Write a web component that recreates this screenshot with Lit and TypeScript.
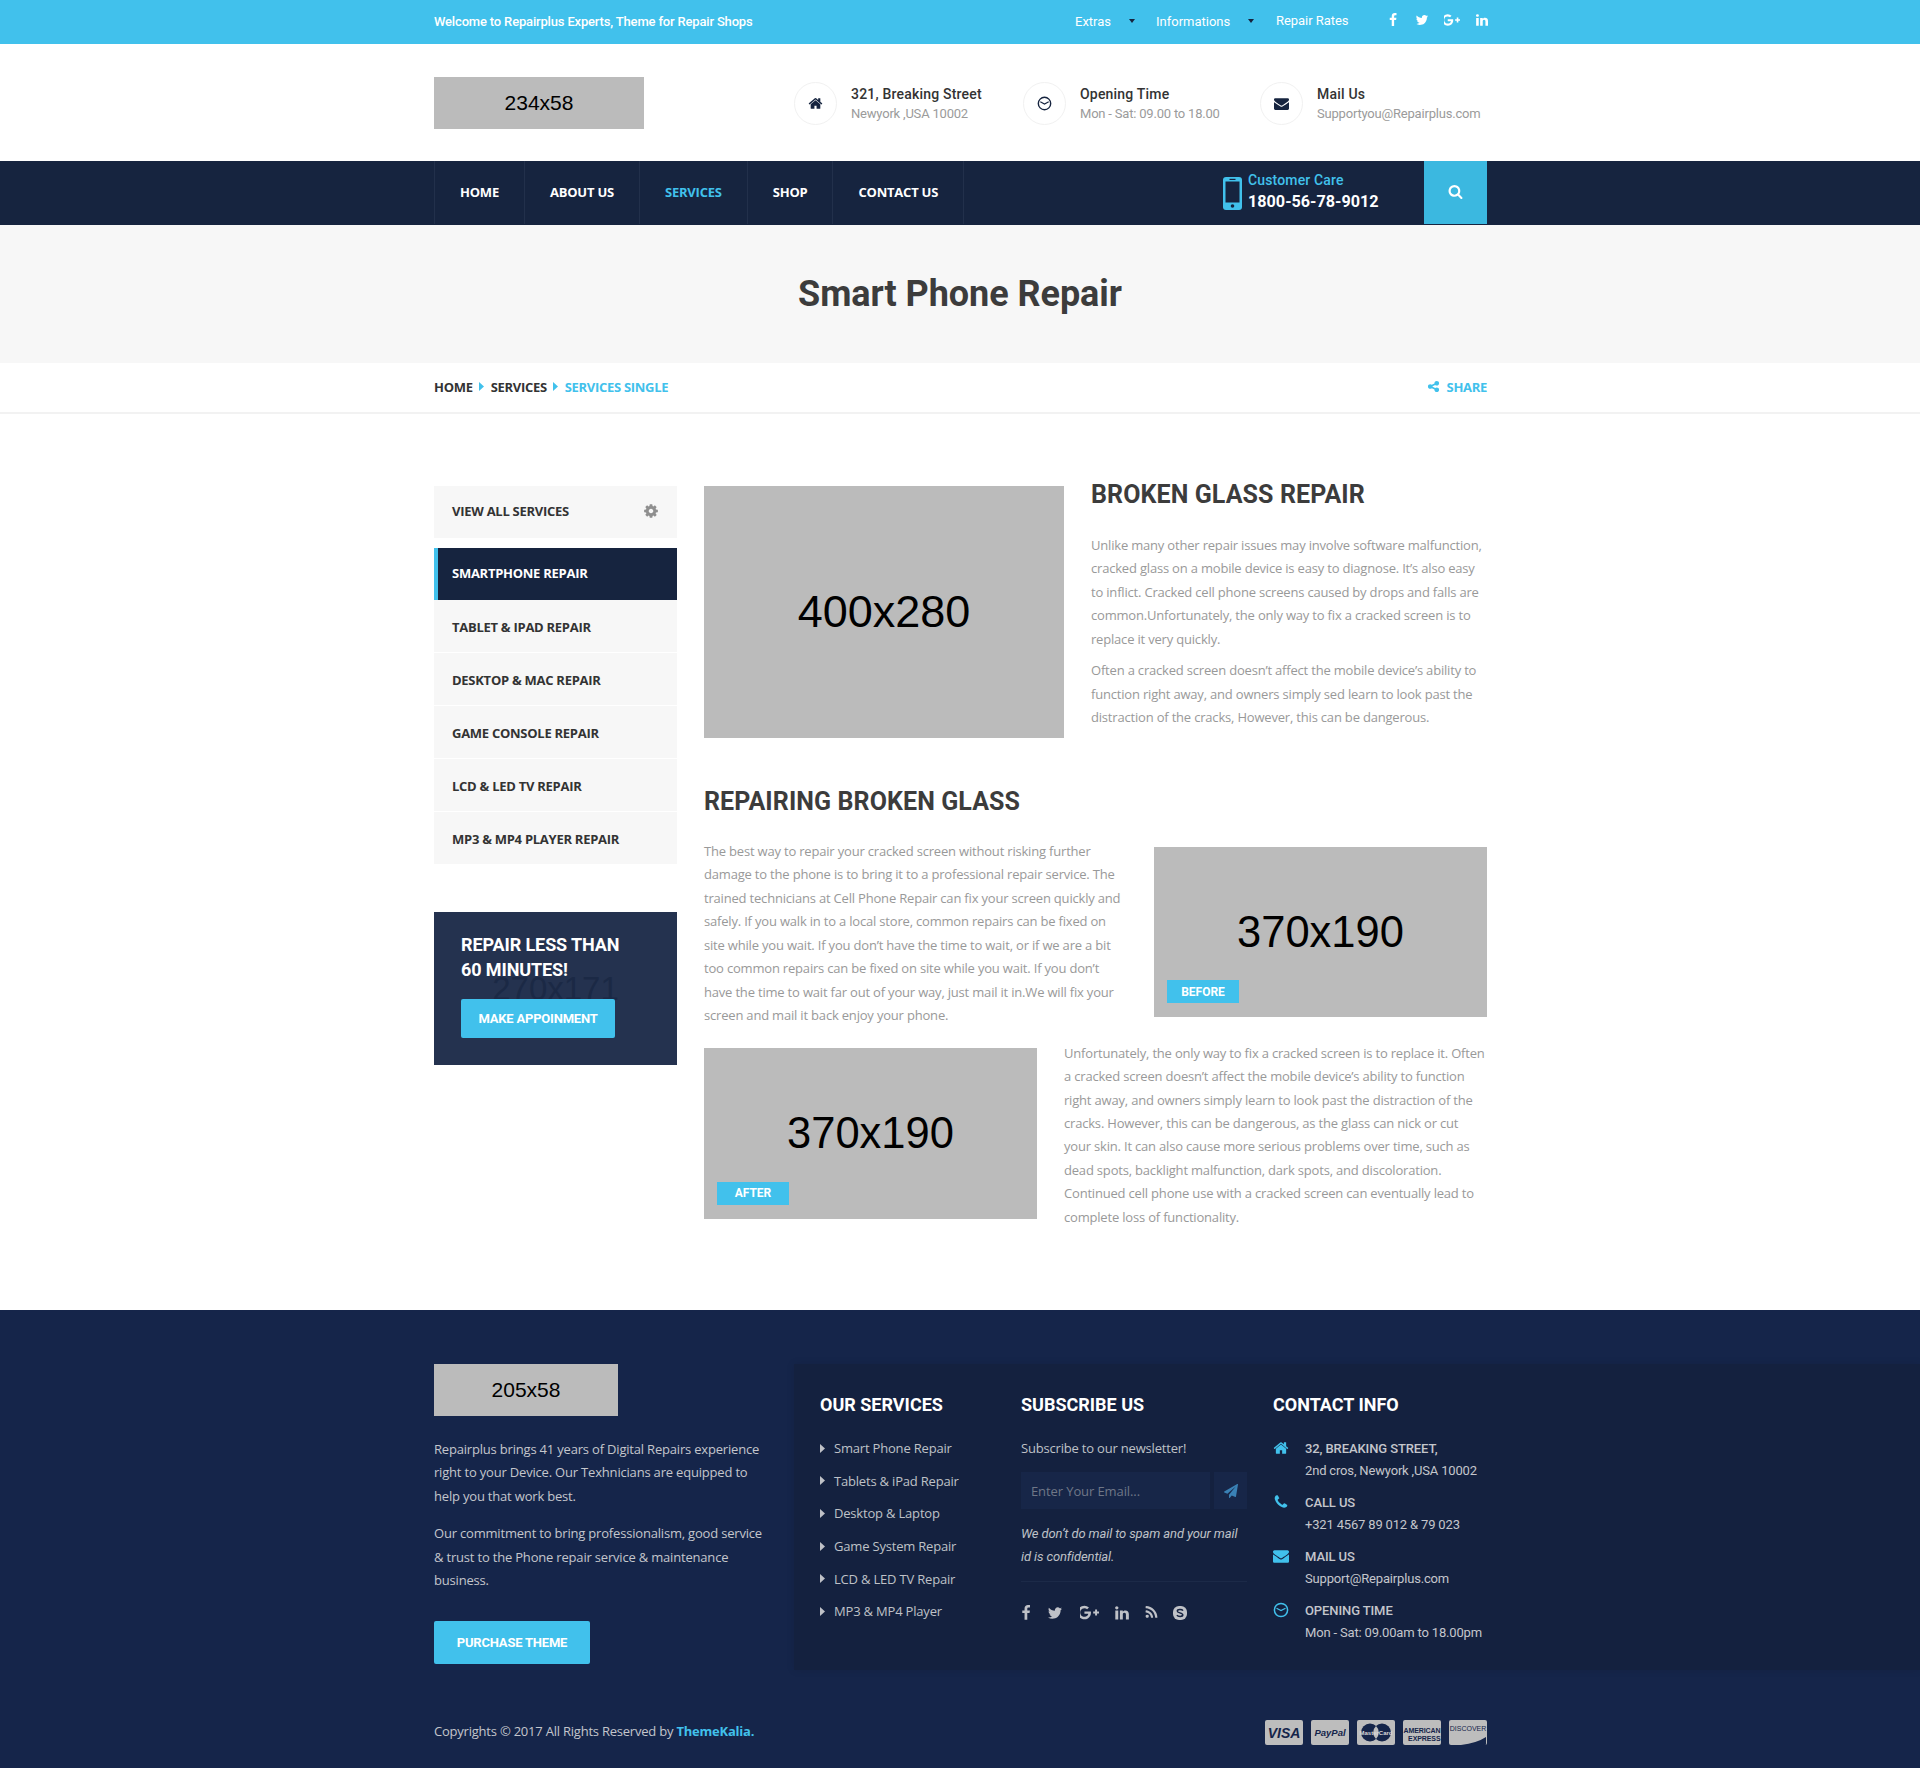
import { LitElement, html, css } from "lit";
import { customElement } from "lit/decorators.js";

// FontAwesome-ish glyph paths, 1792 grid
const P: Record<string, string> = {
  home: "M1472 992v480q0 26-19 45t-45 19h-384v-384h-256v384h-384q-26 0-45-19t-19-45v-480q0-1 .5-3t.5-3l575-474 575 474q1 2 1 6zm223-69l-62 74q-8 9-21 11h-3q-13 0-21-7l-692-577-692 577q-12 8-24 7-13-2-21-11l-62-74q-8-10-7-23.500t11-21.500l719-599q32-26 76-26t76 26l244 204v-195q0-14 9-23t23-9h192q14 0 23 9t9 23v408l219 182q10 8 11 21.500t-7 23.500z",
  mail: "M1792 710v794q0 66-47 113t-113 47h-1472q-66 0-113-47t-47-113v-794q44 49 101 87 362 246 497 345 57 42 92.500 65.500t94.500 48 110 24.500h2q51 0 110-24.500t94.500-48 92.500-65.500q170-123 498-345 57-39 100-87zm0-294q0 79-49 151t-122 123q-376 261-468 325-10 7-42.500 30.500t-54 38-52 32.500-57.500 27-50 9h-2q-23 0-50-9t-57.500-27-52-32.500-54-38-42.500-30.500q-91-64-262-182.500t-205-142.500q-62-42-117-115.500t-55-136.500q0-78 41.500-130t118.500-52h1472q65 0 112.500 47t47.500 113z",
  search: "M1216 832q0-185-131.500-316.500t-316.500-131.500-316.500 131.500-131.500 316.500 131.500 316.500 316.500 131.500 316.500-131.500 131.500-316.500zm512 832q0 52-38 90t-90 38q-54 0-90-38l-343-342q-179 124-399 124-143 0-273.500-55.500t-225-150-150-225-55.500-273.500 55.500-273.500 150-225 225-150 273.500-55.500 273.500 55.500 225 150 150 225 55.500 273.500q0 220-124 399l343 343q37 37 37 90z",
  fb: "M1343 12v264h-157q-86 0-116 36t-30 108v189h293l-39 296h-254v759h-306v-759h-255v-296h255v-218q0-186 104-288.500t277-102.500q147 0 228 12z",
  tw: "M1684 408q-67 98-162 167 1 14 1 42 0 130-38 259.500t-115.500 248.500-184.500 210.500-258 146-323 54.500q-271 0-496-145 35 4 78 4 225 0 401-138-105-2-188-64.500t-114-159.500q33 5 61 5 43 0 85-11-112-23-185.500-111.500t-73.500-205.500v-4q68 38 146 41-66-44-105-115t-39-154q0-88 44-163 121 149 294.500 238.500t371.500 99.500q-8-38-8-74 0-134 94.500-228.500t228.500-94.500q140 0 236 102 109-21 205-78-37 115-142 178 91-10 184-50z",
  in: "M477 625v991h-330v-991h330zm21-306q1 73-50.500 122t-135.500 49h-2q-82 0-132-49t-50-122q0-74 51.500-122.500t134.500-48.500 133 48.500 51 122.500zm1166 729v568h-329v-530q0-105-40.500-164.500t-126.500-59.500q-63 0-105.500 34.500t-63.500 85.500q-11 30-11 81v553h-329q2-399 2-647t-1-296l-1-48h329v144h-2q20-32 41-56t56.500-52 87-43.500 114.500-15.500q171 0 275 113.500t104 332.500z",
  rss: "M576 1344q0 80-56 136t-136 56-136-56-56-136 56-136 136-56 136 56 56 136zm512 123q2 28-17 48-18 21-47 21h-135q-25 0-43-16.500t-20-41.500q-22-229-184.500-391.500t-391.500-184.500q-25-2-41.500-20t-16.500-43v-135q0-29 21-47 17-17 43-17h5q160 13 306 80.500t259 181.500q114 113 181.500 259t80.500 306zm512 2q2 27-18 47-18 20-46 20h-143q-26 0-44.500-17.500t-19.500-42.500q-12-215-101-408.500t-231.500-336-336-231.500-408.500-102q-25-1-42.500-19.500t-17.500-43.500v-143q0-28 20-46 18-18 44-18h3q262 13 501.500 120t425.500 294q187 186 294 425.500t120 501.500z",
  phone: "M1600 1240q0 27-10 70.500t-21 68.500q-21 50-122 106-94 51-186 51-27 0-53-3.500t-57.500-12.500-47-14.500-55.500-20.500-49-18q-98-35-175-83-127-79-264-216t-216-264q-48-77-83-175-3-9-18-49t-20.500-55.500-14.500-47-12.500-57.500-3.500-53q0-92 51-186 56-101 106-122 25-11 68.500-21t70.500-10q14 0 21 3 18 6 53 76 11 19 30 54t35 63.500 31 53.500q3 4 17.500 25t21.500 35.500 7 28.500q0 20-28.500 50t-62 55-62 53-28.500 46q0 9 5 22.500t8.500 20.500 14 24 11.500 19q76 137 174 235t235 174q2 1 19 11.500t24 14 20.500 8.500 22.500 5q18 0 46-28.500t53-62 55-62 50-28.500q14 0 28.500 7t35.500 21.500 25 17.500q25 15 53.500 31t63.500 35 54 30q70 35 76 53 3 7 3 21z",
  plane: "M1764 11q33 24 27 64l-256 1536q-5 29-32 45-14 8-31 8-11 0-24-5l-453-185-242 295q-18 23-49 23-13 0-22-4-19-7-30.500-23.500t-11.500-36.500v-349l864-1059-1069 925-395-162q-37-14-40-55-2-40 32-59l1664-960q15-9 32-9 20 0 36 11z",
  cog: "M1152 896q0-106-75-181t-181-75-181 75-75 181 75 181 181 75 181-75 75-181zm512-109v222q0 12-8 23t-20 13l-185 28q-19 54-39 91 35 50 107 138 10 12 10 25t-9 23q-27 37-99 108t-94 71q-12 0-26-9l-138-108q-44 23-91 38-16 136-29 186-7 28-36 28h-222q-14 0-24.500-8.500t-11.500-21.500l-28-184q-49-16-90-37l-141 107q-10 9-25 9-14 0-25-11-126-114-165-168-7-10-7-23 0-12 8-23 15-21 51-66.500t54-70.500q-27-50-41-99l-183-27q-13-2-21-12.500t-8-23.500v-222q0-12 8-23t19-13l186-28q14-46 39-92-40-57-107-138-10-12-10-24 0-10 9-23 26-36 98.500-107.500t94.500-71.500q13 0 26 10l138 107q44-23 91-38 16-136 29-186 7-28 36-28h222q14 0 24.500 8.500t11.500 21.500l28 184q49 16 90 37l142-107q9-9 24-9 13 0 25 10 129 119 165 170 7 8 7 22 0 12-8 23-15 21-51 66.500t-54 70.500q26 50 41 98l183 28q13 2 21 12.500t8 23.500z",
  share: "M1344 1024q133 0 226.500 93.500t93.500 226.500-93.500 226.500-226.500 93.500-226.500-93.500-93.500-226.500q0-12 2-34l-360-180q-92 86-218 86-133 0-226.500-93.500t-93.500-226.500 93.500-226.500 226.500-93.500q126 0 218 86l360-180q-2-22-2-34 0-133 93.500-226.500t226.500-93.500 226.500 93.500 93.500 226.500-93.500 226.500-226.500 93.500q-126 0-218-86l-360 180q2 22 2 34t-2 34l360 180q92-86 218-86z",
};

const ico = (name: string, size: number, color: string) => html`<svg
  width=${size} height=${size} viewBox="0 0 1792 1792" fill=${color} style="display:block;flex:none"
  ><path d=${P[name]}></path></svg>`;

const gplus = (h: number, color: string) => html`<svg
  height=${h} width=${Math.round((h * 2048) / 1792)} viewBox="0 0 2048 1792" fill=${color} style="display:block;flex:none"
  ><path d="M1181 913q0 208-87 370.500t-248 254-369 91.500q-149 0-285-58t-234-156-156-234-58-285 58-285 156-234 234-156 285-58q286 0 491 192l-199 191q-117-113-292-113-123 0-227.500 62t-165.500 168.500-61 232.500 61 232.500 165.500 168.500 227.500 62q83 0 152.500-23t114.500-57.500 78.500-78.500 49-83 21.500-74h-416v-252h692q12 63 12 122zm867-122v210h-209v209h-210v-209h-209v-210h209v-209h210v209h209z"></path></svg>`;

const clock = (size: number, color: string) => html`<svg
  width=${size} height=${size} viewBox="0 0 16 16" fill="none" stroke=${color} stroke-width="1.5" style="display:block;flex:none"
  ><circle cx="8" cy="8" r="6.6"></circle><path d="M3.5 6.2 L8 8.6 L12.5 6.2" stroke-width="1.2"></path></svg>`;

const skype = (size: number, color: string, bg: string) => html`<svg
  width=${size} height=${size} viewBox="0 0 16 16" style="display:block;flex:none"
  ><rect x="1" y="1" width="14" height="14" rx="6" fill=${color}></rect
  ><path d="M11 5.6C10 4.2 5.4 4 5.3 6.1 5.2 8.200 10.900 7.500 10.800 9.900 10.700 12 6 11.800 4.900 10.200" fill="none" stroke=${bg} stroke-width="1.500"></path></svg>`;

const mobile = () => html`<svg width="19" height="33" viewBox="0 0 19 33" style="display:block;flex:none">
  <rect width="19" height="33" rx="3" fill="#41c1ec"></rect>
  <rect x="2.500" y="4.500" width="14" height="21" fill="#16243f"></rect>
  <circle cx="9.500" cy="29" r="1.800" fill="#16243f"></circle>
  <rect x="6.500" y="1.800" width="6" height="1.200" fill="#16243f"></rect></svg>`;

const caret = (color: string) => html`<svg width="5" height="9" viewBox="0 0 5 9" style="display:block;flex:none"><path d="M0 0L5 4.500L0 9Z" fill=${color}></path></svg>`;

const SIDE = ["Tablet & iPad Repair", "Desktop & Mac Repair", "Game Console Repair", "LCD & LED TV Repair", "MP3 & MP4 Player Repair"];
const FSERV = ["Smart Phone Repair", "Tablets & iPad Repair", "Desktop & Laptop", "Game System Repair", "LCD & LED TV Repair", "MP3 & MP4 Player"];

@customElement("app-root")
export class AppRoot extends LitElement {
  static styles = css`
    :host { display: block; width: 1920px; height: 1768px; overflow: hidden; background: #fff; font-family: "Open Sans", sans-serif; color: #333; }
    * { box-sizing: border-box; }
    h1, h2, h3, h4, p, ul { margin: 0; padding: 0; }
    ul { list-style: none; }
    .wrap { width: 1053px; margin-left: 434px; }
    .ph { background: #bbb; color: #000; display: flex; align-items: center; justify-content: center; font-family: "Liberation Sans", sans-serif; position: relative; flex: none; }

    .top { height: 44px; background: #41c1ec; color: #fff; font-family: Roboto, sans-serif; }
    .top .wrap { display: flex; align-items: center; height: 42px; font-size: 13px; }
    .welcome { font-weight: 500; width: 641px; letter-spacing: -0.17px; flex: none; }
    .tl { display: flex; align-items: center; flex: none; white-space: nowrap; }
    .tl.ex { width: 81px; }
    .tl.inf { width: 120px; }
    .tl.rates { padding-bottom: 1px; letter-spacing: -0.05px; }
    .tri { width: 0; height: 0; border: 3px solid transparent; border-top: 4px solid #16243f; border-bottom: 0; margin-left: 18px; }
    .tsoc { display: flex; align-items: center; margin: 0 -2px 0 auto; gap: 15px; padding-bottom: 2px; }

    .head { height: 117px; }
    .head .wrap { display: flex; height: 100%; padding-top: 33px; }
    .logo { width: 210px; height: 52px; font-size: 21px; margin-right: 150px; }
    .info { display: flex; align-items: center; height: 44px; margin-top: 4px; font-family: Roboto, sans-serif; }
    .info.a { width: 229px; }
    .info.b { width: 237px; }
    .circle { width: 43px; height: 43px; border-radius: 50%; border: 1px solid #f1f1f1; display: flex; align-items: center; justify-content: center; flex: none; margin-right: 14px; }
    .info b { display: block; font-size: 14px; font-weight: 500; color: #333; line-height: 21px; letter-spacing: 0.2px; }
    .info span { display: block; font-size: 13px; color: #9b9b9b; line-height: 17px; letter-spacing: -0.2px; }

    .nav { height: 64px; background: #16243f; }
    .nav .wrap { display: flex; height: 64px; }
    .nav ul { display: flex; border-right: 1px solid #22304b; height: 63px; }
    .nav li { border-left: 1px solid #22304b; padding: 0 25px 2px; display: flex; align-items: center; font-size: 13px; font-weight: 700; color: #fff; text-transform: uppercase; letter-spacing: -0.22px; white-space: nowrap; }
    .nav li.on { color: #41c1ec; }
    .care { display: flex; align-items: center; margin-left: auto; width: 201px; flex: none; font-family: Roboto, sans-serif; gap: 6px; padding-left: 0; }
    .care i { display: block; font-style: normal; font-weight: 500; font-size: 14px; color: #41c1ec; line-height: 16px; letter-spacing: 0.15px; padding-bottom: 3px; margin-top: -1px; }
    .care b { display: block; font-weight: 700; font-size: 16.2px; color: #fff; line-height: 22px; }
    .sbtn { width: 63px; height: 63px; flex: none; background: #3bb8e0; display: flex; align-items: center; justify-content: center; padding-bottom: 2px; }

    .hero { height: 138px; background: #f7f7f7; display: flex; align-items: center; justify-content: center; font-family: Roboto, sans-serif; }
    .hero h1 { font-size: 36px; font-weight: 700; color: #3c3c3c; letter-spacing: -0.05px; }

    .crumb { height: 51px; border-bottom: 2px solid #f2f2f2; }
    .crumb .wrap { display: flex; align-items: center; height: 49px; padding-bottom: 2px; font-size: 13px; letter-spacing: -0.3px; font-weight: 700; text-transform: uppercase; }
    .crumb .sep { margin: 0 6.5px; }
    .c-blue { color: #41c1ec; }
    .share { margin-left: auto; display: flex; align-items: center; gap: 7px; color: #41c1ec; }

    .main { display: flex; gap: 27px; padding-top: 72px; height: 896px; }
    .side { width: 243px; flex: none; }
    .side .all { height: 52px; background: #f7f7f7; display: flex; align-items: center; justify-content: space-between; padding: 0 18px 2px; font-size: 13px; letter-spacing: -0.27px; font-weight: 700; color: #333; text-transform: uppercase; margin-bottom: 10px; }
    .side li { height: 53px; background: #f7f7f7; border-bottom: 1px solid #fff; display: flex; align-items: center; padding: 2px 0 0 18px; font-size: 13px; letter-spacing: -0.27px; font-weight: 700; text-transform: uppercase; color: #333; }
    .side li.on { height: 52px; background: #16243f; color: #fff; border: 0; border-left: 4px solid #41c1ec; padding: 0 0 2px 14px; }
    .cta { margin-top: 47px; height: 153px; background: #24324f; position: relative; padding: 20px 27px; font-family: Roboto, sans-serif; }
    .cta h3 { font-size: 18px; font-weight: 700; line-height: 25px; color: #fff; position: relative; z-index: 1; letter-spacing: -0.1px; }
    .cta .ghost { position: absolute; left: 0; right: 0; top: 58px; text-align: center; font-family: "Liberation Sans", sans-serif; font-size: 33px; color: #1b2945; }
    .btn { background: #41c1ec; color: #fff; font-family: Roboto, sans-serif; font-weight: 700; display: flex; align-items: center; justify-content: center; border-radius: 2px; position: relative; }
    .cta .btn { width: 154px; height: 39px; font-size: 13px; margin-top: 17px; letter-spacing: -0.2px; }

    .content { width: 783px; flex: none; }
    .row { display: flex; }
    .r1 { gap: 27px; }
    .r1 .ph { width: 360px; height: 252px; font-size: 45px; padding-bottom: 1px; }
    .r1 .h2 { margin-top: -6px; }
    .r1 .txt { margin-top: 24px; }
    .r1 .txt + .txt { margin-top: 8px; }
    .h2 { font-family: Roboto, sans-serif; font-weight: 700; font-size: 25px; color: #3c3c3c; text-transform: uppercase; line-height: 30px; letter-spacing: 0.1px; }
    .h2.second { margin-top: 49px; }
    .r2 { justify-content: space-between; margin-top: 30px; }
    .r2 .txt { margin-top: -7px; }
    .r2 .ph { width: 333px; height: 170px; font-size: 43.5px; }
    .r3 { gap: 27px; margin-top: 20px; }
    .r3 .txt { margin-top: -6px; }
    .r3 .ph { width: 333px; height: 171px; font-size: 43.5px; }
    .txt { font-size: 13px; line-height: 23.45px; color: #999; letter-spacing: -0.19px; }
    .tag { position: absolute; left: 13px; bottom: 14px; width: 72px; height: 23px; background: #41c1ec; color: #fff; font-family: Roboto, sans-serif; font-size: 12px; font-weight: 700; display: flex; align-items: center; justify-content: center; text-transform: uppercase; }

    .foot { height: 458px; background: #15254a; position: relative; color: #ccc; }
    .foot .wrap { display: flex; padding-top: 54px; }
    .fl { width: 359px; flex: none; }
    .flogo { width: 184px; height: 52px; font-size: 21px; }
    .fl .txt { color: #c4c6cc; margin-top: 22px; }
    .fl .txt + .txt { margin-top: 14px; }
    .fl .btn { width: 156px; height: 43px; font-size: 13px; margin-top: 28px; letter-spacing: -0.2px; }
    .panel { position: absolute; left: 794px; right: 0; top: 54px; height: 306px; background: #14213f; box-shadow: 0 0 8px rgba(0, 0, 0, .1); padding: 26px 0 0 26px; display: flex; }
    .panel h4 { font-family: Roboto, sans-serif; font-weight: 700; font-size: 18px; color: #fff; text-transform: uppercase; line-height: 30px; }
    .sv { width: 201px; flex: none; }
    .sv ul { margin-top: 12px; }
    .sv li { height: 32.6px; display: flex; align-items: center; font-size: 13px; gap: 9px; color: #bfc1c7; letter-spacing: -0.19px; }
    .sb { width: 252px; flex: none; }
    .sb p { font-size: 13px; line-height: 24px; margin-top: 16px; color: #bfc1c7; letter-spacing: -0.19px; }
    .form { display: flex; gap: 4px; margin-top: 12px; }
    .form .in { width: 189px; height: 37px; background: #172648; color: #6f7787; font-size: 13px; display: flex; align-items: center; padding-left: 10px; letter-spacing: -0.1px; }
    .form .go { width: 33px; height: 37px; background: #172648; display: flex; align-items: center; justify-content: center; }
    .sb .it { font-family: Roboto, sans-serif; font-style: italic; margin-top: 13px; line-height: 23px; font-size: 13px; width: 226px; padding-bottom: 13px; border-bottom: 1px solid #1c2a48; letter-spacing: -0.12px; }
    .soc { display: flex; align-items: center; margin: 22px 0 0 -3px; }
    .soc svg:nth-child(2) { margin-left: 13px; }
    .soc svg:nth-child(3) { margin-left: 17px; }
    .soc svg:nth-child(4) { margin-left: 15px; }
    .soc svg:nth-child(5) { margin-left: 14px; }
    .soc svg:nth-child(6) { margin-left: 13px; }
    .ct { font-family: Roboto, sans-serif; margin-top: 18px; display: flex; flex-direction: column; gap: 10px; }
    .ct .it { display: flex; height: 44px; }
    .ct .ic { width: 32px; padding-top: 2px; flex: none; }
    .ct b { display: block; font-weight: 500; font-size: 13px; line-height: 22px; color: #c4c6cc; text-transform: uppercase; letter-spacing: -0.1px; }
    .ct span { display: block; font-size: 13px; line-height: 22px; color: #c4c6cc; letter-spacing: -0.17px; }

    .copy { position: absolute; left: 434px; width: 1053px; top: 410px; display: flex; align-items: center; justify-content: space-between; font-size: 13px; color: #c4c6cc; height: 25px; letter-spacing: -0.22px; }
    .copy > span { padding-bottom: 4px; }
    .copy b { color: #41c1ec; font-weight: 700; }
    .cards { display: flex; gap: 8px; letter-spacing: 0; }
    .card { width: 38px; height: 25px; background: #bdbdbd; border-radius: 2px; color: #15254a; font-family: "Liberation Sans", sans-serif; display: flex; align-items: center; justify-content: center; overflow: hidden; position: relative; text-align: center; }
    .visa { font-size: 14px; font-weight: 700; font-style: italic; }
    .paypal { font-size: 9.5px; font-weight: 700; font-style: italic; }
    .mc svg { position: absolute; left: 3px; top: 3px; }
    .mc span { position: relative; font-size: 6px; color: #d8d8d8; font-weight: 700; }
    .amex { font-size: 7px; font-weight: 700; line-height: 8px; letter-spacing: -.1px; display: block; padding-top: 4px; white-space: nowrap; }
    .amex span { display: block; text-align: left; }
    .amex span + span { text-align: right; }
    .disc { font-size: 7px; align-items: flex-start; padding-top: 5px; }
    .disc svg { position: absolute; left: 0; bottom: 0; }
  `;

  render() {
    return html`
      <div class="top"><div class="wrap">
        <div class="welcome">Welcome to Repairplus Experts, Theme for Repair Shops</div>
        <div class="tl ex">Extras<i class="tri"></i></div>
        <div class="tl inf">Informations<i class="tri"></i></div>
        <div class="tl rates">Repair Rates</div>
        <div class="tsoc">
          ${ico("fb", 14, "#fff")}${ico("tw", 14, "#fff")}${gplus(14, "#fff")}${ico("in", 14, "#fff")}
        </div>
      </div></div>

      <div class="head"><div class="wrap">
        <div class="ph logo">234x58</div>
        <div class="info a"><div class="circle">${ico("home", 15, "#16243f")}</div><div><b>321, Breaking Street</b><span>Newyork ,USA 10002</span></div></div>
        <div class="info b"><div class="circle">${clock(15, "#16243f")}</div><div><b>Opening Time</b><span>Mon - Sat: 09.00 to 18.00</span></div></div>
        <div class="info"><div class="circle">${ico("mail", 15, "#16243f")}</div><div><b>Mail Us</b><span>Supportyou@Repairplus.com</span></div></div>
      </div></div>

      <div class="nav"><div class="wrap">
        <ul>
          <li>Home</li><li>About Us</li><li class="on">Services</li><li>Shop</li><li>Contact Us</li>
        </ul>
        <div class="care">${mobile()}<div><i>Customer Care</i><b>1800-56-78-9012</b></div></div>
        <div class="sbtn">${ico("search", 15, "#fff")}</div>
      </div></div>

      <div class="hero"><h1>Smart Phone Repair</h1></div>

      <div class="crumb"><div class="wrap">
        <span>Home</span><span class="sep">${caret("#41c1ec")}</span><span>Services</span><span class="sep">${caret("#41c1ec")}</span><span class="c-blue">Services Single</span>
        <div class="share">${ico("share", 13, "#41c1ec")}Share</div>
      </div></div>

      <div class="wrap main">
        <div class="side">
          <div class="all">View all services ${ico("cog", 16, "#8f8f8f")}</div>
          <ul>
            <li class="on">Smartphone Repair</li>
            ${SIDE.map((s) => html`<li>${s}</li>`)}
          </ul>
          <div class="cta">
            <div class="ghost">270x171</div>
            <h3>REPAIR LESS THAN<br />60 MINUTES!</h3>
            <div class="btn">MAKE APPOINMENT</div>
          </div>
        </div>
        <div class="content">
          <div class="row r1">
            <div class="ph">400x280</div>
            <div>
              <div class="h2">Broken Glass Repair</div>
              <p class="txt">Unlike many other repair issues may involve software malfunction,<br />cracked glass on a mobile device is easy to diagnose. It’s also easy<br />to inflict. Cracked cell phone screens caused by drops and falls are<br />common.Unfortunately, the only way to fix a cracked screen is to<br />replace it very quickly.</p>
              <p class="txt">Often a cracked screen doesn’t affect the mobile device’s ability to<br />function right away, and owners simply sed learn to look past the<br />distraction of the cracks, However, this can be dangerous.</p>
            </div>
          </div>
          <div class="h2 second">Repairing Broken Glass</div>
          <div class="row r2">
            <p class="txt">The best way to repair your cracked screen without risking further<br />damage to the phone is to bring it to a professional repair service. The<br />trained technicians at Cell Phone Repair can fix your screen quickly and<br />safely. If you walk in to a local store, common repairs can be fixed on<br />site while you wait. If you don’t have the time to wait, or if we are a bit<br />too common repairs can be fixed on site while you wait. If you don’t<br />have the time to wait far out of your way, just mail it in.We will fix your<br />screen and mail it back enjoy your phone.</p>
            <div class="ph"><span>370x190</span><div class="tag">Before</div></div>
          </div>
          <div class="row r3">
            <div class="ph"><span>370x190</span><div class="tag">After</div></div>
            <p class="txt">Unfortunately, the only way to fix a cracked screen is to replace it. Often<br />a cracked screen doesn’t affect the mobile device’s ability to function<br />right away, and owners simply learn to look past the distraction of the<br />cracks. However, this can be dangerous, as the glass can nick or cut<br />your skin. It can also cause more serious problems over time, such as<br />dead spots, backlight malfunction, dark spots, and discoloration.<br />Continued cell phone use with a cracked screen can eventually lead to<br />complete loss of functionality.</p>
          </div>
        </div>
      </div>

      <div class="foot">
        <div class="wrap">
          <div class="fl">
            <div class="ph flogo">205x58</div>
            <p class="txt">Repairplus brings 41 years of Digital Repairs experience<br />right to your Device. Our Texhnicians are equipped to<br />help you that work best.</p>
            <p class="txt">Our commitment to bring professionalism, good service<br />&amp; trust to the Phone repair service &amp; maintenance<br />business.</p>
            <div class="btn">PURCHASE THEME</div>
          </div>
        </div>
        <div class="panel">
          <div class="sv">
            <h4>Our Services</h4>
            <ul>${FSERV.map((s) => html`<li>${caret("#bfc1c7")}${s}</li>`)}</ul>
          </div>
          <div class="sb">
            <h4>Subscribe Us</h4>
            <p>Subscribe to our newsletter!</p>
            <div class="form"><div class="in">Enter Your Email...</div><div class="go">${ico("plane", 14, "#3a81b5")}</div></div>
            <p class="it">We don’t do mail to spam and your mail<br />id is confidential.</p>
            <div class="soc">
              ${ico("fb", 16, "#bfc1c7")}${ico("tw", 16, "#bfc1c7")}${gplus(17, "#bfc1c7")}${ico("in", 16, "#bfc1c7")}${ico("rss", 15, "#bfc1c7")}${skype(16, "#bfc1c7", "#14213f")}
            </div>
          </div>
          <div>
            <h4>Contact Info</h4>
            <div class="ct">
              <div class="it"><div class="ic">${ico("home", 16, "#41c1ec")}</div><div><b>32, Breaking Street,</b><span>2nd cros, Newyork ,USA 10002</span></div></div>
              <div class="it"><div class="ic">${ico("phone", 16, "#41c1ec")}</div><div><b>Call Us</b><span>+321 4567 89 012 &amp; 79 023</span></div></div>
              <div class="it"><div class="ic">${ico("mail", 16, "#41c1ec")}</div><div><b>Mail Us</b><span>Support@Repairplus.com</span></div></div>
              <div class="it"><div class="ic">${clock(16, "#41c1ec")}</div><div><b>Opening Time</b><span>Mon - Sat: 09.00am to 18.00pm</span></div></div>
            </div>
          </div>
        </div>
        <div class="copy">
          <span>Copyrights © 2017 All Rights Reserved by <b>ThemeKalia.</b></span>
          <div class="cards">
            <div class="card visa">VISA</div>
            <div class="card paypal">PayPal</div>
            <div class="card mc">
              <svg width="32" height="19" viewBox="0 0 32 19"><circle cx="10" cy="9.500" r="9" fill="#15254a"></circle><circle cx="22" cy="9.500" r="9" fill="#15254a"></circle><path d="M16 3a9 9 0 0 1 0 13a9 9 0 0 1 0-13z" fill="#bdbdbd"></path></svg>
              <span>MasterCard</span>
            </div>
            <div class="card"><div class="amex"><span>AMERICAN</span><span>EXPRESS</span></div></div>
            <div class="card disc">
              DISCOVER
              <svg width="38" height="11" viewBox="0 0 38 11"><path d="M12 11Q28 9 37 3V11Z" fill="#15254a"></path></svg>
            </div>
          </div>
        </div>
      </div>
    `;
  }
}
